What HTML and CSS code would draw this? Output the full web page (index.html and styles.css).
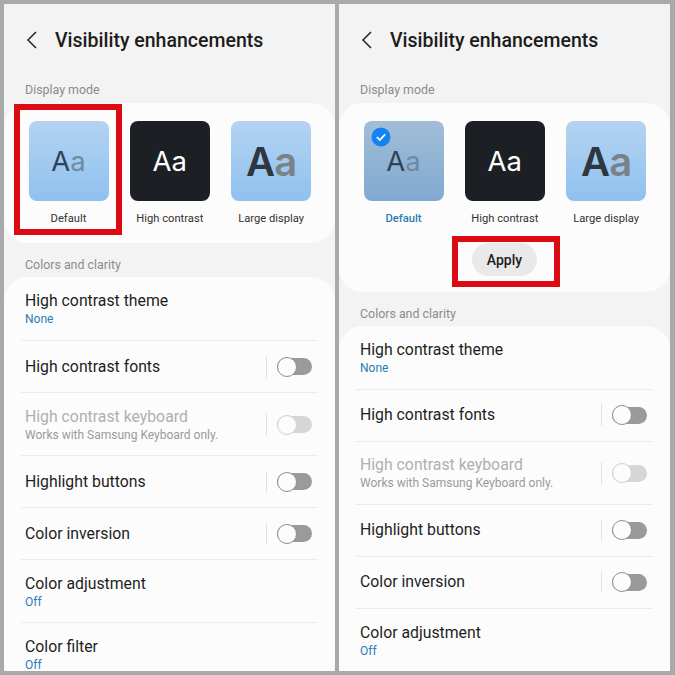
FILE: index.html
```html
<!DOCTYPE html>
<html lang="en">

<head>
    <meta charset="UTF-8" />
    <title>Visibility enhancements</title>
    <link rel="stylesheet" href="styles.css">
</head>

<body>
    <div class="screens">
        <!-- Left phone: nothing selected yet -->
        <section class="phone">
            <header class="top-bar">
                <svg class="back" width="11" height="18" viewBox="0 0 11 18"><path d="M10 1 2 9l8 8" /></svg>
                <h1>Visibility enhancements</h1>
            </header>
            <h2 class="section-title first">Display mode</h2>
            <div class="card modes">
                <div class="mode-row">
                    <div class="mode highlighted">
                        <div class="thumb light"><span class="aa">A<i>a</i></span></div>
                        <div class="mode-label">Default</div>
                    </div>
                    <div class="mode">
                        <div class="thumb dark"><span class="aa">Aa</span></div>
                        <div class="mode-label">High contrast</div>
                    </div>
                    <div class="mode">
                        <div class="thumb light"><span class="aa big">A<i>a</i></span></div>
                        <div class="mode-label">Large display</div>
                    </div>
                </div>
            </div>
            <h2 class="section-title">Colors and clarity</h2>
            <div class="card settings">
                <div class="row tall-a"><div><div class="row-title">High contrast theme</div><div class="row-value">None</div></div></div>
                <div class="row"><div class="row-title">High contrast fonts</div><div class="switch-wrap"><span class="switch"></span></div></div>
                <div class="row disabled tall-b"><div><div class="row-title">High contrast keyboard</div><div class="row-note">Works with Samsung Keyboard only.</div></div><div class="switch-wrap"><span class="switch"></span></div></div>
                <div class="row"><div class="row-title">Highlight buttons</div><div class="switch-wrap"><span class="switch"></span></div></div>
                <div class="row"><div class="row-title">Color inversion</div><div class="switch-wrap"><span class="switch"></span></div></div>
                <div class="row tall-b"><div><div class="row-title">Color adjustment</div><div class="row-value">Off</div></div></div>
                <div class="row tall-b"><div><div class="row-title">Color filter</div><div class="row-value">Off</div></div></div>
            </div>
        </section>

        <!-- Right phone: Default selected, Apply showing -->
        <section class="phone">
            <header class="top-bar">
                <svg class="back" width="11" height="18" viewBox="0 0 11 18"><path d="M10 1 2 9l8 8" /></svg>
                <h1>Visibility enhancements</h1>
            </header>
            <h2 class="section-title first">Display mode</h2>
            <div class="card modes with-apply">
                <div class="mode-row">
                    <div class="mode selected">
                        <div class="thumb light">
                            <svg class="check" width="20" height="20" viewBox="0 0 20 20"><circle cx="10" cy="10" r="9.5" /><path d="M5.8 10.2 8.8 13l5.4-5.6" /></svg>
                            <span class="aa">A<i>a</i></span>
                        </div>
                        <div class="mode-label">Default</div>
                    </div>
                    <div class="mode">
                        <div class="thumb dark"><span class="aa">Aa</span></div>
                        <div class="mode-label">High contrast</div>
                    </div>
                    <div class="mode">
                        <div class="thumb light"><span class="aa big">A<i>a</i></span></div>
                        <div class="mode-label">Large display</div>
                    </div>
                </div>
                <div class="apply-wrap"><button class="apply">Apply</button></div>
            </div>
            <h2 class="section-title">Colors and clarity</h2>
            <div class="card settings cut-off">
                <div class="row tall-a"><div><div class="row-title">High contrast theme</div><div class="row-value">None</div></div></div>
                <div class="row"><div class="row-title">High contrast fonts</div><div class="switch-wrap"><span class="switch"></span></div></div>
                <div class="row disabled tall-b"><div><div class="row-title">High contrast keyboard</div><div class="row-note">Works with Samsung Keyboard only.</div></div><div class="switch-wrap"><span class="switch"></span></div></div>
                <div class="row"><div class="row-title">Highlight buttons</div><div class="switch-wrap"><span class="switch"></span></div></div>
                <div class="row"><div class="row-title">Color inversion</div><div class="switch-wrap"><span class="switch"></span></div></div>
                <div class="row tall-b"><div><div class="row-title">Color adjustment</div><div class="row-value">Off</div></div></div>
            </div>
        </section>
    </div>
</body>

</html>
```

FILE: styles.css
```css
/* Reset & base */
*,
*::after {
    margin: 0;
    padding: 0;
    box-sizing: border-box;
    font-family: Roboto, 'Noto Sans', sans-serif;
}

html,
body {
    height: 100%;
    overflow: hidden;
}

body {
    background-color: #a9a9a9;
}

.screens {
    display: flex;
    gap: 4px;
    padding: 4px;
    height: 675px;
}

/* Phone */
.phone {
    width: 331px;
    height: 667px;
    overflow: hidden;
    background-color: #f3f3f3;
}

.top-bar {
    display: flex;
    align-items: center;
    height: 72px;
    padding-left: 22px;
}

.back {
    flex-shrink: 0;
    margin-right: 18px;
}

.back path {
    fill: none;
    stroke: #222;
    stroke-width: 1.5;
}

h1 {
    font-size: 19.5px;
    font-weight: 500;
    color: #1c1c1c;
    white-space: nowrap;
}

.section-title {
    font-size: 12.4px;
    font-weight: 400;
    color: #8c8c8c;
    line-height: 14px;
    padding-left: 21px;
    margin: 15px 0 5px;
}

.section-title.first {
    margin: 7px 0 6px;
}

.card {
    background-color: #fcfcfc;
    border-radius: 24px;
}

/* Display mode */
.modes {
    padding: 18px 0 18px;
}

.modes.with-apply {
    padding-bottom: 15.5px;
}

.mode-row {
    display: flex;
    gap: 21.3px;
    padding-left: 24.5px;
}

.mode {
    position: relative;
    width: 80px;
    text-align: center;
}

.mode.highlighted::after {
    content: "";
    position: absolute;
    left: -14.5px;
    top: -17px;
    width: 108px;
    height: 131px;
    border: 6px solid #dc0a12;
}

.thumb {
    position: relative;
    display: flex;
    align-items: center;
    justify-content: center;
    height: 80px;
    border-radius: 8px;
}

.thumb.light {
    background: linear-gradient(#b4d3f1, #8fc1ef);
}

.thumb.dark {
    background-color: #1c2024;
    color: white;
}

.selected .thumb.light {
    background: linear-gradient(#a2bdd8, #81a9d0);
}

.check {
    position: absolute;
    left: 7px;
    top: 6px;
}

.check circle {
    fill: #1283f0;
}

.check path {
    fill: none;
    stroke: white;
    stroke-width: 1.8;
}

.aa {
    font-size: 27.5px;
    font-weight: 400;
    color: #2f4258;
    font-family: Inter, Roboto, sans-serif;
}

.dark .aa {
    color: white;
}

.aa i {
    font-style: normal;
    font-family: inherit;
    color: #6f8aa5;
}

.aa.big {
    font-size: 40px;
    font-weight: 600;
    letter-spacing: -1px;
    color: #2e3640;
}

.aa.big i {
    color: #7a8288;
}

.mode-label {
    font-size: 11.2px;
    line-height: 13px;
    color: #333;
    margin-top: 11px;
    white-space: nowrap;
}

.selected .mode-label {
    font-weight: 500;
    color: #2a7db5;
}

/* Apply */
.apply-wrap {
    position: relative;
    width: 65px;
    margin: 18px auto 0;
}

.apply-wrap::after {
    content: "";
    position: absolute;
    left: -20px;
    top: -7px;
    width: 108px;
    height: 51px;
    border: 6px solid #dc0a12;
}

.apply {
    display: block;
    width: 65px;
    height: 33px;
    border: none;
    border-radius: 17px;
    background-color: #e9e9e9;
    color: #1c1c1c;
    font-size: 14px;
    font-weight: 500;
}

/* Settings list */
.settings {
    padding: 0 17px;
}

.settings.cut-off {
    border-radius: 24px 24px 0 0;
}

.row {
    display: flex;
    align-items: center;
    justify-content: space-between;
    height: 52px;
    padding: 0 6px 0 4px;
    border-bottom: 1px solid #ececec;
}

.row:last-child {
    border-bottom: none;
}

.row.tall-a {
    height: 64px;
    padding-top: 1px;
}

.row.tall-b {
    height: 63px;
    padding-top: 1px;
}

.row-title {
    font-size: 15.8px;
    line-height: 20px;
    color: #1e1e1e;
}

.row-value {
    font-size: 12px;
    line-height: 16px;
    color: #2a7db5;
}

.row-note {
    font-size: 12px;
    line-height: 16px;
    color: #9a9a9a;
}

.disabled .row-title {
    color: #b0b0b0;
}

.switch-wrap {
    display: flex;
    align-items: center;
    height: 22px;
    padding-left: 10px;
    border-left: 1px solid #e2e2e2;
}

.switch {
    position: relative;
    display: block;
    width: 35px;
    height: 17px;
    border-radius: 9px;
    background-color: #9a9a9a;
}

.switch::after {
    content: "";
    position: absolute;
    left: 0;
    top: -1.5px;
    width: 20px;
    height: 20px;
    border-radius: 50%;
    background-color: #fcfcfc;
    border: 1px solid #8f8f8f;
}

.disabled .switch {
    background-color: #d6d6d6;
}

.disabled .switch::after {
    border-color: #d0d0d0;
}
```
